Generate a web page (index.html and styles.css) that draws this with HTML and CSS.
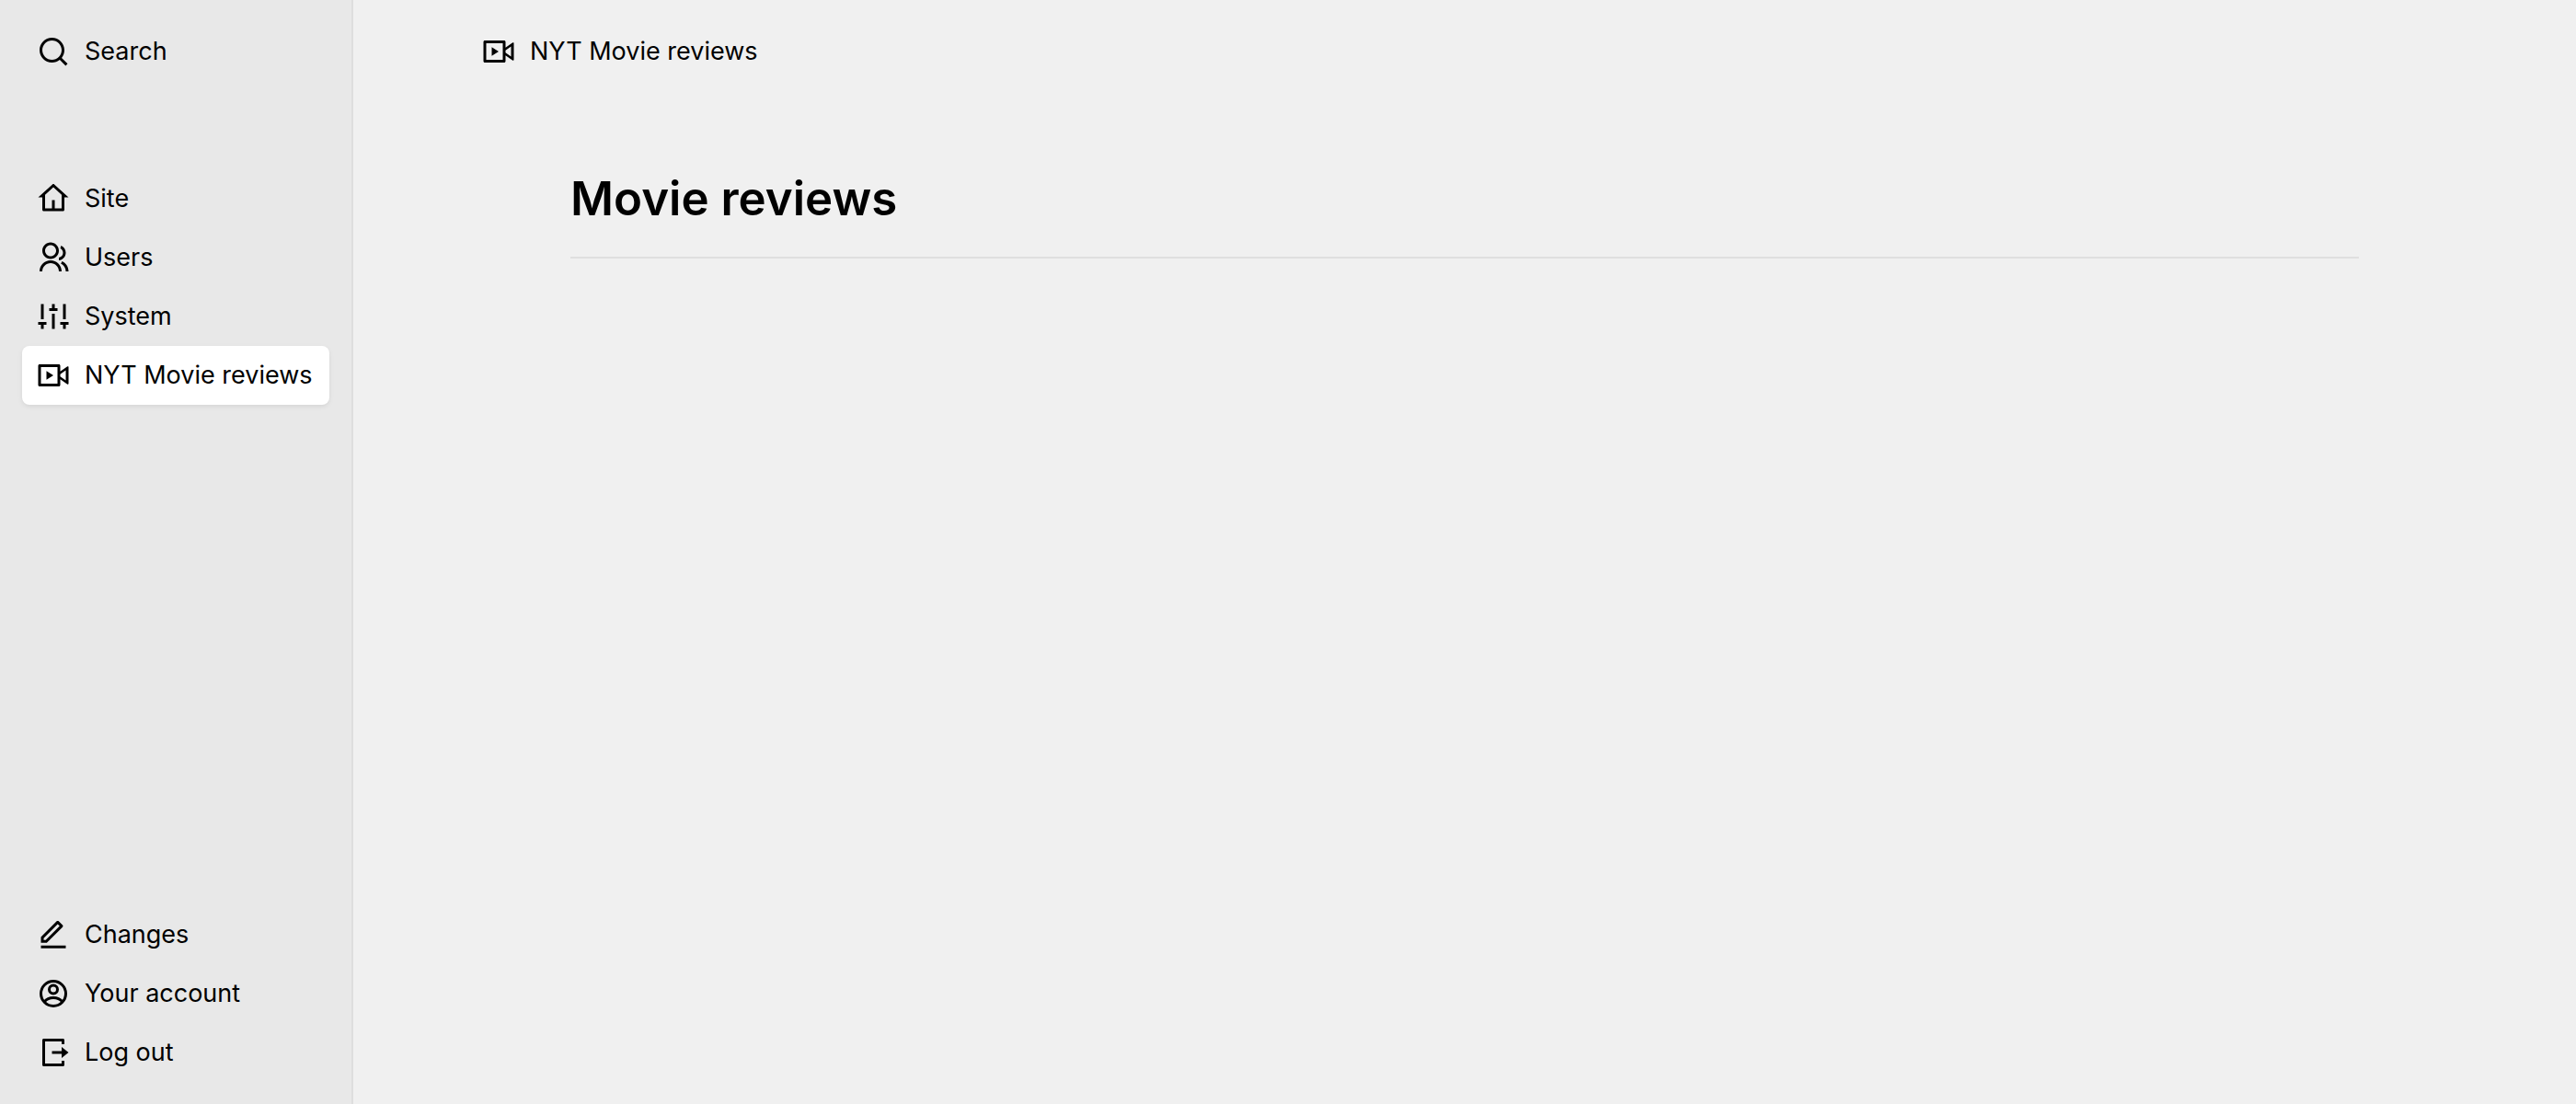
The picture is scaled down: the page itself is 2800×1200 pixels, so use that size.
FILE: index.html
```html
<!DOCTYPE html>
<html lang="en">
<head>
<meta charset="utf-8">
<meta name="viewport" content="width=device-width, initial-scale=1">
<title>NYT Movie reviews</title>
<link rel="stylesheet" href="styles.css">
</head>
<body>
<svg class="sprite" aria-hidden="true">
  <symbol id="icon-video" viewBox="0 0 24 24"><path d="M17 9.2L22.2133 5.55C22.44 5.39 22.75 5.45 22.91 5.67C22.97 5.76 23 5.86 23 5.96V18.04C23 18.32 22.78 18.54 22.5 18.54C22.4 18.54 22.3 18.51 22.2133 18.45L17 14.8V19C17 19.5523 16.5523 20 16 20H2C1.44772 20 1 19.5523 1 19V5C1 4.44772 1.44772 4 2 4H16C16.5523 4 17 4.44772 17 5V9.2ZM17 12.8416L21 15.6416V8.35843L17 11.1584V12.8416ZM3 6V18H15V6H3ZM7 8.8L12 12L7 15.2Z" fill-rule="evenodd"/></symbol>
</svg>
<div class="panel">
  <aside class="menu">
    <button class="item" type="button">
      <svg class="icon" viewBox="0 0 24 24" aria-hidden="true"><path d="M18.031 16.6168L22.3137 20.8995L20.8995 22.3137L16.6168 18.031C15.0769 19.263 13.124 20 11 20C6.032 20 2 15.968 2 11C2 6.032 6.032 2 11 2C15.968 2 20 6.032 20 11C20 13.124 19.263 15.0769 18.031 16.6168ZM16.0247 15.8748C17.2475 14.6146 18 12.8956 18 11C18 7.1325 14.8675 4 11 4C7.1325 4 4 7.1325 4 11C4 14.8675 7.1325 18 11 18C12.8956 18 14.6146 17.2475 15.8748 16.0247L16.0247 15.8748Z"/></svg>
      <span>Search</span>
    </button>
    <nav class="areas" aria-label="Areas">
      <a class="item" href="#site">
        <svg class="icon" viewBox="0 0 24 24" aria-hidden="true"><path d="M19 21H5C4.44772 21 4 20.5523 4 20V11L1 11L11.3273 1.6115C11.7087 1.26475 12.2913 1.26475 12.6727 1.6115L23 11L20 11V20C20 20.5523 19.5523 21 19 21ZM13 19H18V9.15745L12 3.7029L6 9.15745V19H11V13H13V19Z"/></svg>
        <span>Site</span>
      </a>
      <a class="item" href="#users">
        <svg class="icon" viewBox="0 0 24 24" aria-hidden="true"><path d="M2 22C2 17.5817 5.58172 14 10 14C14.4183 14 18 17.5817 18 22H16C16 18.6863 13.3137 16 10 16C6.68629 16 4 18.6863 4 22H2ZM10 13C6.685 13 4 10.315 4 7C4 3.685 6.685 1 10 1C13.315 1 16 3.685 16 7C16 10.315 13.315 13 10 13ZM10 11C12.21 11 14 9.21 14 7C14 4.79 12.21 3 10 3C7.79 3 6 4.79 6 7C6 9.21 7.79 11 10 11ZM18.2837 14.7028C21.0644 15.9561 23 18.752 23 22H21C21 19.564 19.5483 17.4671 17.4628 16.5271L18.2837 14.7028ZM17.5962 3.41321C19.5944 4.23703 21 6.20361 21 8.5C21 11.3702 18.8042 13.7252 16 13.9776V11.9646C17.6967 11.7222 19 10.264 19 8.5C19 7.11935 18.2016 5.92603 17.041 5.35635L17.5962 3.41321Z"/></svg>
        <span>Users</span>
      </a>
      <a class="item" href="#system">
        <svg class="icon" viewBox="0 0 24 24" aria-hidden="true"><path d="M3 3H5V14H3ZM1 16H7V18H5V21H3V18H1ZM11 3H13V6H15V8H9V6H11ZM11 10H13V21H11ZM19 3H21V14H19ZM17 16H23V18H21V21H19V18H17Z"/></svg>
        <span>System</span>
      </a>
      <a class="item item-current" href="#reviews" aria-current="page">
        <svg class="icon" aria-hidden="true"><use href="#icon-video"/></svg>
        <span>NYT Movie reviews</span>
      </a>
    </nav>
    <nav class="account" aria-label="Account">
      <a class="item" href="#changes">
        <svg class="icon" viewBox="0 0 24 24" aria-hidden="true"><path d="M6.41421 15.89L16.5563 5.74785L15.1421 4.33363L5 14.4758V15.89H6.41421ZM7.24264 17.89H3V13.6473L14.435 2.21231C14.8256 1.82179 15.4587 1.82179 15.8492 2.21231L18.6777 5.04074C19.0682 5.43126 19.0682 6.06443 18.6777 6.45495L7.24264 17.89ZM3 19.89H21V21.89H3V19.89Z"/></svg>
        <span>Changes</span>
      </a>
      <a class="item" href="#account">
        <svg class="icon icon-outline" viewBox="0 0 24 24" aria-hidden="true"><circle cx="12" cy="12" r="9"/><circle cx="12" cy="9" r="3"/><path d="M5.6 17.8C7 16 9.3 15 12 15C14.7 15 17 16 18.4 17.8"/></svg>
        <span>Your account</span>
      </a>
      <a class="item" href="#logout">
        <svg class="icon" viewBox="0 0 24 24" aria-hidden="true"><path d="M5 22C4.44772 22 4 21.5523 4 21V3C4 2.44772 4.44772 2 5 2H19C19.5523 2 20 2.44772 20 3V6H18V4H6V20H18V18H20V21C20 21.5523 19.5523 22 19 22H5ZM18 16V13H11V11H18V8L23 12L18 16Z"/></svg>
        <span>Log out</span>
      </a>
    </nav>
  </aside>
  <main class="main">
    <nav class="topbar" aria-label="Breadcrumb">
      <a class="item" href="#reviews">
        <svg class="icon" aria-hidden="true"><use href="#icon-video"/></svg>
        <span>NYT Movie reviews</span>
      </a>
    </nav>
    <header class="header">
      <h1 class="title">Movie reviews</h1>
    </header>
  </main>
</div>
</body>
</html>
```

FILE: styles.css
```css
* {
  box-sizing: border-box;
}

body {
  margin: 0;
  background: #f0f0f0;
  color: #000;
  font-family: Inter, "Liberation Sans", sans-serif;
  font-size: 27px;
  line-height: 36px;
}

.sprite {
  display: none;
}

.panel {
  display: grid;
  grid-template-columns: 384px 1fr;
  min-height: 100vh;
}

.menu {
  display: flex;
  flex-direction: column;
  padding: 24px;
  background: #e8e8e8;
  border-right: 2px solid #dedede;
}

.areas {
  margin-top: 96px;
}

.account {
  margin-top: auto;
}

.item {
  display: flex;
  align-items: center;
  gap: 16px;
  height: 64px;
  padding: 0 16px;
  border: 0;
  border-radius: 8px;
  background: none;
  color: inherit;
  font: inherit;
  text-align: left;
  text-decoration: none;
  white-space: nowrap;
}

.item-current {
  background: #fff;
  box-shadow: 0 2px 6px rgba(0, 0, 0, 0.05), 0 2px 4px rgba(0, 0, 0, 0.03);
}

.icon {
  flex: none;
  width: 36px;
  height: 36px;
  fill: currentColor;
}

.icon-outline {
  fill: none;
  stroke: currentColor;
  stroke-width: 2;
}

.topbar {
  display: flex;
  padding: 24px 124px;
}

.header {
  margin: 68px 236px 0;
  padding-bottom: 27px;
  border-bottom: 2px solid #dfdfdf;
}

.title {
  margin: 0;
  font-size: 51px;
  font-weight: 600;
  line-height: 72px;
}
```
